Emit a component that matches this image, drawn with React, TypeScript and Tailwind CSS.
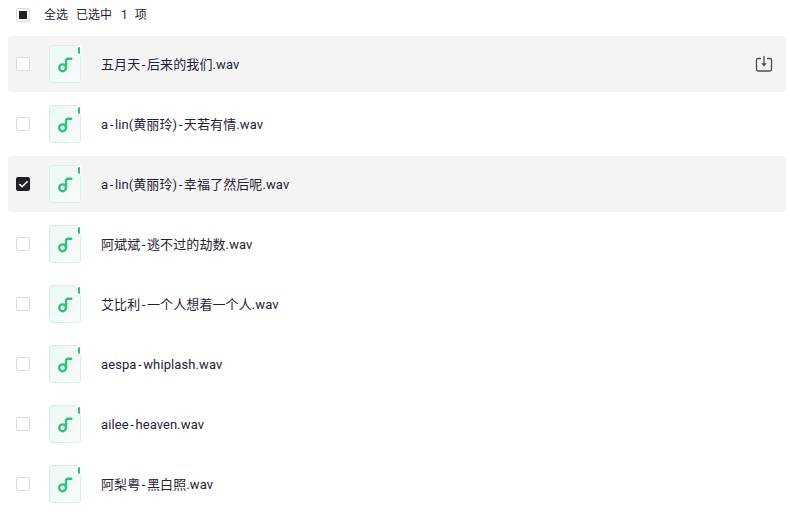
import { Check } from 'lucide-react';

const files = [
  { name: '五月天-后来的我们.wav', hovered: true },
  { name: 'a-lin(黄丽玲)-天若有情.wav' },
  { name: 'a-lin(黄丽玲)-幸福了然后呢.wav', checked: true },
  { name: '阿斌斌-逃不过的劫数.wav' },
  { name: '艾比利-一个人想着一个人.wav' },
  { name: 'aespa-whiplash.wav' },
  { name: 'ailee-heaven.wav' },
  { name: '阿梨粤-黑白照.wav' },
];

function FileIcon() {
  return (
    <div className="relative flex h-[38px] w-8 shrink-0 items-center justify-center rounded-[3px] border border-[#d8f0e4] bg-gradient-to-br from-[#eaf8f1] to-[#f8fcfa]">
      <div className="absolute -right-px -top-px h-[10px] w-1 bg-white" />
      <div className="absolute right-0 top-px h-[7px] w-[2px] rounded-[1px] bg-[#2fc27d]" />
      <svg width="18" height="18" viewBox="0 0 18 18" fill="none">
        <circle cx="6.6" cy="12.8" r="3.4" stroke="#2fc27d" strokeWidth="2.4" />
        <path d="M10 12.8V6C10 4.6 10.8 3.8 12.2 3.8H15.2" stroke="#2fc27d" strokeWidth="2.4" strokeLinecap="round" />
      </svg>
    </div>
  );
}

function SaveIcon() {
  return (
    <svg width="18" height="18" viewBox="0 0 18 18" fill="none" stroke="#4a4d57" strokeWidth="1.3">
      <path d="M5.5 3.5H3a1.5 1.5 0 0 0-1.5 1.5v9.5A1.5 1.5 0 0 0 3 16h12a1.5 1.5 0 0 0 1.5-1.5V5A1.5 1.5 0 0 0 15 3.5h-2.5" strokeLinecap="round" />
      <path d="M9 1.5v8" strokeLinecap="round" />
      <path d="M6.8 8.5h4.4L9 11.2z" fill="#4a4d57" strokeWidth="0.6" strokeLinejoin="round" />
    </svg>
  );
}

function Checkbox({ checked }: { checked?: boolean }) {
  if (checked) {
    return (
      <span className="flex h-[14px] w-[14px] items-center justify-center rounded-[2px] bg-[#1f2129]">
        <Check size={11} color="#fff" strokeWidth={3.5} />
      </span>
    );
  }
  return <span className="block h-[14px] w-[14px] rounded-[2px] border border-[#dcdcdc] bg-white" />;
}

// the dash sits wider in the original font
function FileName({ name }: { name: string }) {
  const parts = name.split('-');
  return (
    <span className="ml-5 flex-1 truncate pt-px tracking-[0.1px]">
      {parts.map((part, i) => (
        <span key={i}>
          {i > 0 && <span className="mx-[1.5px]">-</span>}
          {part}
        </span>
      ))}
    </span>
  );
}

export default function App() {
  return (
    <div className="h-[522px] w-[786px] overflow-hidden bg-white font-['Roboto','Noto_Sans_CJK_SC',sans-serif] text-[13px] text-[#1f2233]">
      <div className="flex h-[29px] items-center pl-4 text-xs">
        <span className="flex h-[14px] w-[14px] items-center justify-center rounded-[2px] border border-[#dcdcdc] bg-white">
          <span className="block h-2 w-2 bg-[#1f2129]" />
        </span>
        <span className="ml-[14px]">全选</span>
        <span className="ml-2">已选中</span>
        <span className="ml-[9px]">1</span>
        <span className="ml-[7px]">项</span>
      </div>
      <div className="ml-2 mt-[7px] flex flex-col gap-1">
        {files.map((f) => (
          <div
            key={f.name}
            className={`flex h-14 items-center rounded pl-2 pr-[13px] ${f.hovered || f.checked ? 'bg-[#f4f4f4]' : ''}`}
          >
            <Checkbox checked={f.checked} />
            <div className="ml-[19px]">
              <FileIcon />
            </div>
            <FileName name={f.name} />
            {f.hovered && <SaveIcon />}
          </div>
        ))}
      </div>
    </div>
  );
}
